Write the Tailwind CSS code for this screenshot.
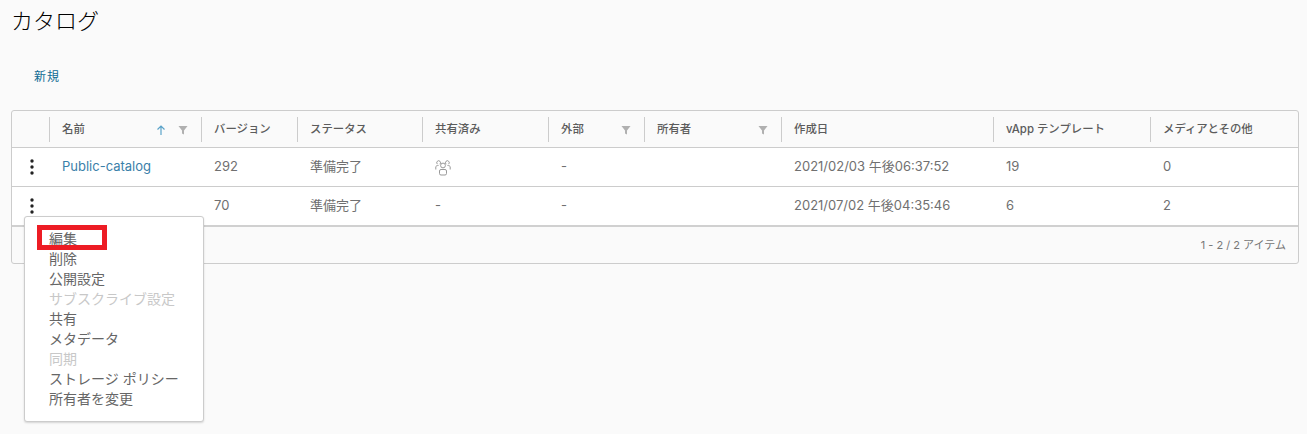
<!DOCTYPE html>
<html lang="ja">
<head>
<meta charset="utf-8">
<script src="https://cdn.jsdelivr.net/npm/@tailwindcss/browser@4"></script>
</head>
<body class="bg-[#fafafa] h-[434px] overflow-hidden font-['Inter','Noto_Sans_CJK_JP',sans-serif] text-[#707070] relative">
<div class="pl-[11px] pr-[8px]">
  <h1 class="h-[42px] pt-[4px] text-[22px] leading-[30px] text-black font-['Noto_Sans_CJK_JP',sans-serif] font-light">カタログ</h1>
  <div class="h-[68px] pl-[23px] pt-[25px] text-[12px] leading-[20px] text-[#0f6a93] tracking-[1px]">新規</div>
  <div class="h-[154px] border border-[#cccccc] rounded-[3px] bg-[#fafafa] overflow-hidden">
    <div class="h-[37px] border-b border-[#ccc] grid grid-cols-[37px_152px_96px_125px_126px_96px_137px_212px_157px_1fr] text-[11.4px] font-medium text-[#5c5c5c] items-center">
      <div class="h-[25px]"></div>
      <div class="h-[25px] pt-[2px] border-l border-[#ccc] pl-3 pr-[13px] flex items-center justify-between">
        <span>名前</span>
        <span class="flex items-center gap-[12px]">
          <svg class="w-[10px] h-[10px]" viewBox="0 0 10 10" fill="none" stroke="#5ba3c9" stroke-width="1.2"><path d="M5 10V1M1.500 4.500 5 1l3.500 3.500"/></svg>
          <svg class="w-[10px] h-[10px]" viewBox="0 0 10 10" fill="#b0b0b0"><path d="M0.500 1h9L6 5.500V9.500L4 8.500V5.500z"/></svg>
        </span>
      </div>
      <div class="h-[25px] pt-[2px] border-l border-[#ccc] pl-3 flex items-center">バージョン</div>
      <div class="h-[25px] pt-[2px] border-l border-[#ccc] pl-3 flex items-center">ステータス</div>
      <div class="h-[25px] pt-[2px] border-l border-[#ccc] pl-3 flex items-center">共有済み</div>
      <div class="h-[25px] pt-[2px] border-l border-[#ccc] pl-3 pr-[13px] flex items-center justify-between">
        <span>外部</span>
        <svg class="w-[10px] h-[10px]" viewBox="0 0 10 10" fill="#b0b0b0"><path d="M0.500 1h9L6 5.500V9.500L4 8.500V5.500z"/></svg>
      </div>
      <div class="h-[25px] pt-[2px] border-l border-[#ccc] pl-3 pr-[13px] flex items-center justify-between">
        <span>所有者</span>
        <svg class="w-[10px] h-[10px]" viewBox="0 0 10 10" fill="#b0b0b0"><path d="M0.500 1h9L6 5.500V9.500L4 8.500V5.500z"/></svg>
      </div>
      <div class="h-[25px] pt-[2px] border-l border-[#ccc] pl-3 flex items-center">作成日</div>
      <div class="h-[25px] pt-[2px] border-l border-[#ccc] pl-3 flex items-center">vApp テンプレート</div>
      <div class="h-[25px] pt-[2px] border-l border-[#ccc] pl-3 flex items-center">メディアとその他</div>
    </div>
    <div class="h-[39px] bg-white border-b border-[#ccc] grid grid-cols-[37px_152px_96px_125px_126px_96px_137px_212px_157px_1fr] text-[13px] items-center">
      <div class="flex justify-center pl-[2px]"><svg class="w-[4px] h-[16px]" viewBox="0 0 4 16" fill="#222"><circle cx="2" cy="2" r="1.700"/><circle cx="2" cy="8" r="1.700"/><circle cx="2" cy="14" r="1.700"/></svg></div>
      <div class="pl-[13px] text-[#3a80a9]">Public-catalog</div>
      <div class="pl-[13px]">292</div>
      <div class="pl-[13px]">準備完了</div>
      <div class="pl-[13px]"><svg class="w-[16px] h-[16px] mt-[2px]" viewBox="0 0 16 16" fill="none" stroke="#999" stroke-width="1"><circle cx="8" cy="5.500" r="2.400"/><rect x="4.500" y="9.500" width="7" height="5.500" rx="1.500"/><path d="M4.800 4.200A1.900 1.900 0 1 0 2.500 4.200M11.200 4.200A1.900 1.900 0 1 1 13.500 4.200M0.800 9.500V7C0.800 6 1.800 5.500 3.500 5.500M15.200 9.500V7C15.200 6 14.200 5.500 12.500 5.500"/></svg></div>
      <div class="pl-[13px]">-</div>
      <div></div>
      <div class="pl-[13px]">2021/02/03 午後06:37:52</div>
      <div class="pl-[13px]">19</div>
      <div class="pl-[13px]">0</div>
    </div>
    <div class="h-[40px] bg-white border-b-2 border-[#d0d0d0] grid grid-cols-[37px_152px_96px_125px_126px_96px_137px_212px_157px_1fr] text-[13px] items-center">
      <div class="flex justify-center pl-[2px]"><svg class="w-[4px] h-[16px]" viewBox="0 0 4 16" fill="#222"><circle cx="2" cy="2" r="1.700"/><circle cx="2" cy="8" r="1.700"/><circle cx="2" cy="14" r="1.700"/></svg></div>
      <div></div>
      <div class="pl-[13px]">70</div>
      <div class="pl-[13px]">準備完了</div>
      <div class="pl-[13px]">-</div>
      <div class="pl-[13px]">-</div>
      <div></div>
      <div class="pl-[13px]">2021/07/02 午後04:35:46</div>
      <div class="pl-[13px]">6</div>
      <div class="pl-[13px]">2</div>
    </div>
    <div class="h-[36px] flex items-center justify-end pr-[12px] text-[11px] text-[#777]">1 - 2 / 2 アイテム</div>
  </div>
</div>
<div class="absolute left-[24px] top-[216px] w-[180px] h-[206px] bg-white border border-[#ccc] rounded-[3px] shadow-[0_1px_2px_rgba(0,0,0,0.15)] pl-[24px] pt-[11px] text-[14px] leading-[20px] text-[#666] font-['Noto_Sans_CJK_JP',sans-serif]">
  <div>編集</div>
  <div>削除</div>
  <div>公開設定</div>
  <div class="text-[#c8c8c8]">サブスクライブ設定</div>
  <div>共有</div>
  <div>メタデータ</div>
  <div class="text-[#c8c8c8]">同期</div>
  <div class="[word-spacing:1px]">ストレージ ポリシー</div>
  <div>所有者を変更</div>
</div>
<div class="absolute left-[37px] top-[225px] w-[70px] h-[25px] border-[5px] border-[#ed1c24]"></div>
</body>
</html>
